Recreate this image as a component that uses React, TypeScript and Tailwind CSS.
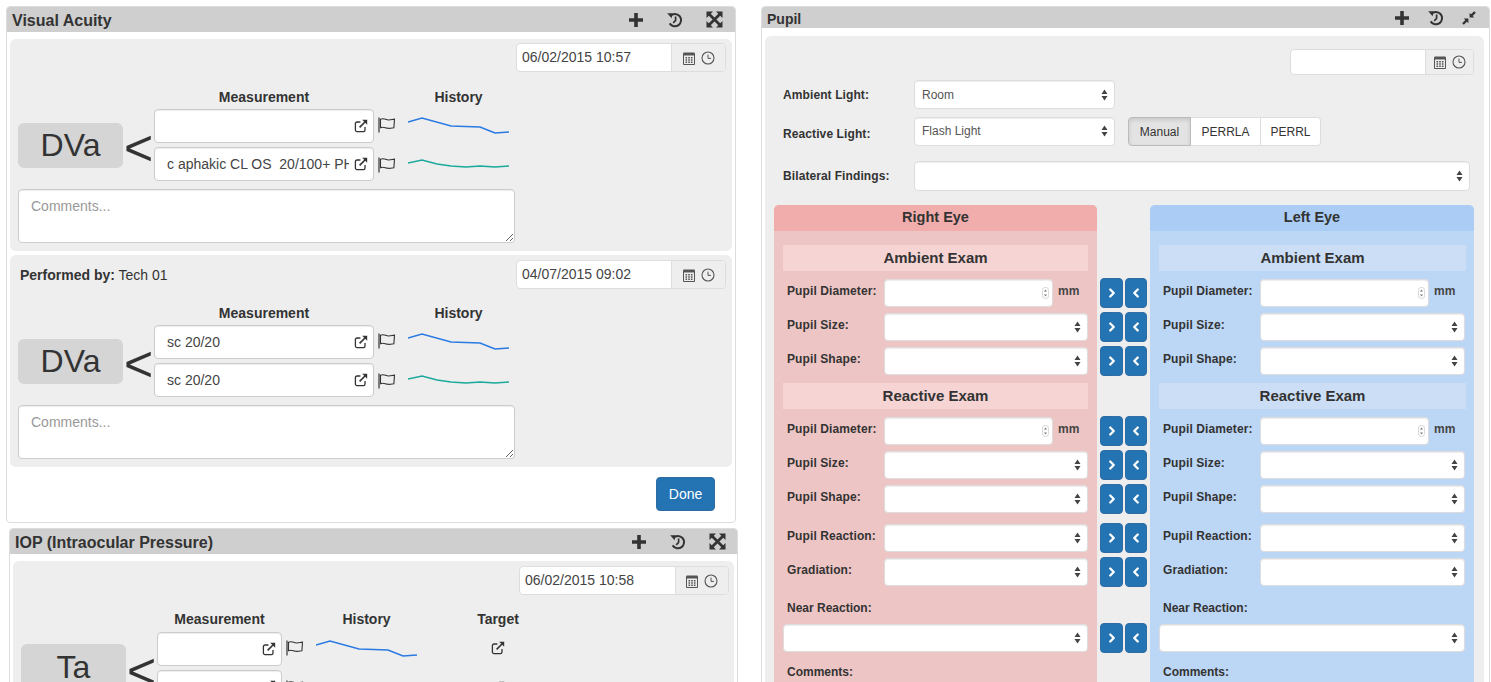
import React from 'react';
import { ChevronLeft, ChevronRight } from 'lucide-react';

const font = "font-['Liberation_Sans',Arial,sans-serif]";
const inset = 'shadow-[inset_0_1px_1px_rgba(0,0,0,0.075)]';

const PlusIcon = () => (
  <svg width="16" height="16" viewBox="0 0 16 16" className="text-[#333]">
    <path d="M1 6.2h5.2V1h3.6v5.2H15v3.6H9.8V15H6.2V9.8H1z" fill="currentColor" />
  </svg>
);

const HistoryIcon = () => (
  <svg width="16" height="16" viewBox="0 0 16 16" fill="none" className="text-[#333]">
    <path d="M3.4 3.8A6.2 6.2 0 1 1 2.6 11.4" stroke="currentColor" strokeWidth="2" />
    <path d="M0.2 1.2h5.4l-1 5z" fill="currentColor" />
    <path d="M8.6 4.4v4l-2.4 2.4" stroke="currentColor" strokeWidth="1.7" />
  </svg>
);

const ExpandIcon = () => (
  <svg width="17" height="17" viewBox="0 0 17 17" fill="none" className="text-[#333]">
    <path d="M3 3l11 11M14 3L3 14" stroke="currentColor" strokeWidth="2.8" />
    <path d="M0.5 0.5h6.5L0.5 7zM16.5 0.5v6.5L10 0.5zM0.5 16.5V10L7 16.5zM16.5 16.5H10L16.5 10z" fill="currentColor" />
  </svg>
);

const CompressIcon = () => (
  <svg width="14" height="14" viewBox="0 0 14 14" fill="none" className="text-[#333]">
    <path d="M13 1L9.5 4.5M1 13l3.5-3.5" stroke="currentColor" strokeWidth="2.4" />
    <path d="M7.6 1.8v4.6h4.6zM6.4 12.2V7.6H1.8z" fill="currentColor" />
  </svg>
);

const FlagIcon = () => (
  <svg width="19" height="16" viewBox="0 0 19 16" fill="none" className="text-[#333] shrink-0 mt-[1px]">
    <path d="M1 0.5v15" stroke="currentColor" strokeWidth="1.2" />
    <path d="M2.5 2.2c3.5-1.6 5 0.6 8 0.8 2.2 0.1 3.8-0.6 6-0.9l-0.6 8.6c-2.4 0.4-3.8 0.9-6 0.6-2.8-0.3-4.4-1.8-7.4-0.6z" stroke="currentColor" strokeWidth="1.1" />
  </svg>
);

const LinkIcon = () => (
  <svg width="14" height="14" viewBox="0 0 14 14" fill="none" className="text-[#333] shrink-0">
    <path d="M11 8v3a1.6 1.6 0 0 1-1.6 1.6H3A1.6 1.6 0 0 1 1.4 11V4.6A1.6 1.6 0 0 1 3 3h3.4" stroke="currentColor" strokeWidth="1.3" />
    <path d="M5.6 8.4L11 3" stroke="currentColor" strokeWidth="1.6" />
    <path d="M8.2 0.8h5v5z" fill="currentColor" />
  </svg>
);

const CalendarIcon = () => (
  <svg width="12" height="14" viewBox="0 0 12 14" fill="none" className="text-[#555]">
    <path d="M0.5 2.5h11v11H0.5z" stroke="currentColor" />
    <path d="M0.5 1.5h11V4.5H0.5z" fill="currentColor" />
    <path d="M2.5 6h1.6v1.4H2.5zM5.2 6h1.6v1.4H5.2zM7.9 6h1.6v1.4H7.9zM2.5 8.3h1.6v1.4H2.5zM5.2 8.3h1.6v1.4H5.2zM7.9 8.3h1.6v1.4H7.9zM2.5 10.6h1.6V12H2.5zM5.2 10.6h1.6V12H5.2zM7.9 10.6h1.6V12H7.9z" fill="currentColor" />
  </svg>
);

const ClockIcon = () => (
  <svg width="14" height="14" viewBox="0 0 14 14" fill="none" className="text-[#555]">
    <circle cx="7" cy="7" r="6" stroke="currentColor" strokeWidth="1.1" />
    <path d="M7 3.6V7.4h3" stroke="currentColor" strokeWidth="1" />
  </svg>
);

const SelectArrows = () => (
  <svg width="7" height="12" viewBox="0 0 7 12" className="text-[#444]">
    <path d="M3.5 0.5L6.5 5H0.5zM3.5 11.5L0.5 7h6z" fill="currentColor" />
  </svg>
);

const Spinner = () => (
  <svg width="7" height="12" viewBox="0 0 7 12" fill="none" className="text-[#777]">
    <rect x="0.4" y="0.4" width="6.2" height="11.2" rx="3" stroke="#ccc" strokeWidth="0.8" />
    <path d="M3.5 2.4L5 4.6H2zM3.5 9.6L2 7.4h3z" fill="currentColor" />
  </svg>
);

const Spark = ({ points, color }: { points: string; color: string }) => (
  <svg width="102" height="18" viewBox="0 0 102 18" fill="none" className="shrink-0">
    <polyline points={points} stroke={color} strokeWidth="1.6" />
  </svg>
);

const BLUE_LINE = '0,6 14,2 43,10 72,11 87,17 101,16';
const TEAL_LINE = '0,7 14,4 29,8 43,10 58,11 72,10 87,11 101,10';

const Panel = ({
  title,
  collapse,
  className,
  headerClass,
  titleClass,
  iconsClass,
  children,
}: {
  title: string;
  collapse?: boolean;
  className: string;
  headerClass: string;
  titleClass: string;
  iconsClass: string;
  children: React.ReactNode;
}) => (
  <div className={`bg-white border border-[#ddd] rounded-[4px] overflow-hidden ${className}`}>
    <div className={`flex items-center justify-between bg-[#cfcfcf] pl-[5px] ${headerClass}`}>
      <span className={`font-bold text-[#333] ${titleClass}`}>{title}</span>
      <div className={`flex items-center ${iconsClass}`}>
        <PlusIcon />
        <HistoryIcon />
        {collapse ? <CompressIcon /> : <ExpandIcon />}
      </div>
    </div>
    {children}
  </div>
);

const DateGroup = ({ value, inputClass, className }: { value: string; inputClass: string; className: string }) => (
  <div className={`flex border border-[#ddd] rounded-[4px] bg-white overflow-hidden ${className}`}>
    <div className={`flex items-center pl-[5px] text-[14px] text-[#444] ${inputClass}`}>{value}</div>
    <div className="flex-1 flex items-center justify-center gap-[6px] bg-[#eee] border-l border-[#ddd]">
      <CalendarIcon />
      <ClockIcon />
    </div>
  </div>
);

const MeasureInput = ({ value, className }: { value: string; className: string }) => (
  <div className={`relative h-[34px] ${className}`}>
    <input
      readOnly
      value={value}
      className={`w-full h-full bg-white border border-[#ccc] rounded-[4px] pl-[12px] pr-[24px] text-[14px] text-[#444] outline-none ${inset}`}
    />
    <span className="absolute right-[6px] top-[10px]">
      <LinkIcon />
    </span>
  </div>
);

const VisualWell = ({
  date,
  first,
  second,
  performer,
}: {
  date: string;
  first: string;
  second: string;
  performer?: boolean;
}) => (
  <div className={`h-[212px] bg-[#eee] rounded-[6px] pl-[8px] pr-[6px] ${performer ? 'pt-[5px]' : 'pt-[4px]'}`}>
    <div className="flex items-center justify-between">
      {performer ? (
        <div className="pl-[2px] pt-[2px] text-[14px] text-[#333]">
          <span className="font-bold">Performed by:</span> Tech 01
        </div>
      ) : (
        <div />
      )}
      <DateGroup value={date} className="w-[210px] h-[29px]" inputClass="w-[154px]" />
    </div>
    <div className={`flex h-[20px] items-center text-[14px] font-bold text-[#333] text-center ${performer ? 'mt-[14px]' : 'mt-[15px]'}`}>
      <div className="w-[136px]" />
      <div className="w-[220px]">Measurement</div>
      <div className="w-[34px]" />
      <div className="w-[101px]">History</div>
    </div>
    <div className="flex items-center mt-[2px]">
      <div className="w-[105px] h-[45px] rounded-[6px] bg-[#d5d5d5] flex items-center justify-center text-[32px] text-[#333]">DVa</div>
      <div className="w-[31px] text-[50px] font-light leading-none text-[#333] text-center mt-[6px]">&lt;</div>
      <div className="flex flex-col gap-[4px] w-[220px]">
        <MeasureInput value={first} className="w-full" />
        <MeasureInput value={second} className="w-full" />
      </div>
      <div className="flex flex-col gap-[22px] ml-[4px]">
        <div className="flex items-start gap-[11px]">
          <FlagIcon />
          <Spark points={BLUE_LINE} color="#2a7ae2" />
        </div>
        <div className="flex items-start gap-[11px]">
          <FlagIcon />
          <Spark points={TEAL_LINE} color="#1aa99a" />
        </div>
      </div>
    </div>
    <textarea
      readOnly
      placeholder="Comments..."
      className={`block w-[497px] h-[54px] mt-[8px] bg-white border border-[#ccc] rounded-[4px] px-[12px] py-[6px] text-[14px] outline-none placeholder:text-[#999] ${inset}`}
    />
  </div>
);

const SelectBox = ({ value, className }: { value?: string; className: string }) => (
  <div className={`flex items-center justify-between bg-white border border-[#ddd] rounded-[4px] pl-[7px] pr-[6px] text-[12px] text-[#555] ${inset} ${className}`}>
    <span>{value}</span>
    <SelectArrows />
  </div>
);

const FieldRow = ({
  label,
  number,
  selectClass,
  className,
}: {
  label: string;
  number?: boolean;
  selectClass: string;
  className?: string;
}) => (
  <div className={`flex items-start h-[28px] ${className ?? ''}`}>
    <div className="w-[101px] pl-[4px] pt-[3px] text-[12px] font-bold text-[#333] shrink-0 tracking-[0.1px]">{label}</div>
    {number ? (
      <>
        <div className={`w-[169px] h-[28px] flex items-center justify-end pr-[3px] bg-white border border-[#ddd] rounded-[4px] ${inset}`}>
          <Spinner />
        </div>
        <span className="ml-[5px] pt-[3px] text-[12px] font-bold text-[#444]">mm</span>
      </>
    ) : (
      <SelectBox className={`h-[28px] ${selectClass}`} />
    )}
  </div>
);

const ExamHead = ({ text, className, mt }: { text: string; className: string; mt: string }) => (
  <div className={`h-[26px] flex items-center justify-center text-[15px] font-bold text-[#333] ${className} ${mt}`}>{text}</div>
);

const EyeColumn = ({
  title,
  widthClass,
  padClass,
  selectClass,
  nearClass,
  headClass,
  bodyClass,
  subClass,
}: {
  title: string;
  widthClass: string;
  padClass: string;
  selectClass: string;
  nearClass: string;
  headClass: string;
  bodyClass: string;
  subClass: string;
}) => (
  <div className={`shrink-0 h-[520px] rounded-t-[5px] overflow-hidden ${widthClass} ${bodyClass}`}>
    <div className={`h-[26px] flex items-center justify-center text-[14.5px] font-bold text-[#333] ${headClass}`}>{title}</div>
    <div className={`pl-[9px] pt-[14px] ${padClass}`}>
      <ExamHead text="Ambient Exam" className={subClass} mt="" />
      <FieldRow label="Pupil Diameter:" number selectClass={selectClass} className="mt-[8px]" />
      <FieldRow label="Pupil Size:" selectClass={selectClass} className="mt-[6px]" />
      <FieldRow label="Pupil Shape:" selectClass={selectClass} className="mt-[6px]" />
      <ExamHead text="Reactive Exam" className={subClass} mt="mt-[8px]" />
      <FieldRow label="Pupil Diameter:" number selectClass={selectClass} className="mt-[8px]" />
      <FieldRow label="Pupil Size:" selectClass={selectClass} className="mt-[6px]" />
      <FieldRow label="Pupil Shape:" selectClass={selectClass} className="mt-[6px]" />
      <FieldRow label="Pupil Reaction:" selectClass={selectClass} className="mt-[11px]" />
      <FieldRow label="Gradiation:" selectClass={selectClass} className="mt-[6px]" />
      <div className="mt-[12px] h-[20px] pl-[4px] flex items-center text-[12px] font-bold text-[#333]">Near Reaction:</div>
      <SelectBox className={`mt-[6px] h-[28px] ${nearClass}`} />
      <div className="mt-[10px] h-[20px] pl-[4px] flex items-center text-[12px] font-bold text-[#333]">Comments:</div>
    </div>
  </div>
);

const ArrowPair = ({ className }: { className: string }) => (
  <div className={`flex gap-[2px] ${className}`}>
    <button className="w-[23px] h-[30px] flex items-center justify-center bg-[#2474b3] border border-[#2e6da4] rounded-[4px] text-white">
      <ChevronRight size={14} strokeWidth={4} />
    </button>
    <button className="w-[22px] h-[30px] flex items-center justify-center bg-[#2474b3] border border-[#2e6da4] rounded-[4px] text-white">
      <ChevronLeft size={14} strokeWidth={4} />
    </button>
  </div>
);

const TopLabel = ({ text, className }: { text: string; className?: string }) => (
  <div className={`w-[131px] text-[12px] font-bold text-[#333] tracking-[0.1px] ${className ?? ''}`}>{text}</div>
);

export default function App() {
  return (
    <div className={`${font} flex h-[682px] w-[1491px] overflow-hidden bg-white`}>
      {/* left column */}
      <div className="w-[755px] pl-[6px] pt-[6px] shrink-0">
        <Panel
          title="Visual Acuity"
          className="w-[730px] h-[517px]"
          headerClass="h-[25px] pr-[12px]"
          titleClass="text-[16px] pt-[3px]"
          iconsClass="gap-[23px]"
        >
          <div className="pt-[7px] px-[3px] flex flex-col gap-[4px]">
            <VisualWell date="06/02/2015 10:57" first="" second="c aphakic CL OS  20/100+ PH" />
            <VisualWell date="04/07/2015 09:02" first="sc 20/20" second="sc 20/20" performer />
            <div className="flex justify-end pr-[17px] mt-[6px]">
              <button className="w-[59px] h-[34px] bg-[#2474b3] border border-[#2e6da4] rounded-[4px] text-white text-[14px]">Done</button>
            </div>
          </div>
        </Panel>

        <Panel
          title="IOP (Intraocular Pressure)"
          className="ml-[3px] mt-[5px] w-[729px] h-[200px]"
          headerClass="h-[25px] pr-[11px]"
          titleClass="text-[16px] pt-[3px]"
          iconsClass="gap-[23px]"
        >
          <div className="mt-[7px] mx-[3px] bg-[#eee] rounded-[6px] pt-[5px] pl-[8px] pr-[5px] h-[180px]">
            <div className="flex justify-end">
              <DateGroup value="06/02/2015 10:58" className="w-[210px] h-[29px]" inputClass="w-[155px]" />
            </div>
            <div className="flex mt-[14px] h-[20px] items-center text-[14px] font-bold text-[#333] text-center">
              <div className="w-[136px]" />
              <div className="w-[125px]">Measurement</div>
              <div className="w-[34px]" />
              <div className="w-[101px]">History</div>
              <div className="w-[162px]">Target</div>
            </div>
            <div className="flex items-center mt-[3px]">
              <div className="w-[105px] h-[45px] rounded-[6px] bg-[#d5d5d5] flex items-center justify-center text-[32px] text-[#333] -mt-[3px]">Ta</div>
              <div className="w-[31px] text-[50px] font-light leading-none text-[#333] text-center mt-[6px]">&lt;</div>
              <div className="flex flex-col gap-[4px] w-[125px]">
                <MeasureInput value="" className="w-full" />
                <MeasureInput value="" className="w-full" />
              </div>
              <div className="flex flex-col gap-[22px] ml-[4px]">
                <div className="flex items-start gap-[11px]">
                  <FlagIcon />
                  <Spark points={BLUE_LINE} color="#2a7ae2" />
                  <span className="ml-[62px] mt-[2px]">
                    <LinkIcon />
                  </span>
                </div>
                <div className="flex items-start gap-[11px]">
                  <FlagIcon />
                  <Spark points={TEAL_LINE} color="#1aa99a" />
                  <span className="ml-[62px] mt-[2px]">
                    <LinkIcon />
                  </span>
                </div>
              </div>
            </div>
          </div>
        </Panel>
      </div>

      {/* right column */}
      <div className="pl-[6px] pt-[6px] shrink-0">
        <Panel
          title="Pupil"
          collapse
          className="w-[729px] h-[700px]"
          headerClass="h-[21px] pr-[13px]"
          titleClass="text-[14px] pt-[4px]"
          iconsClass="gap-[18px]"
        >
          <div className="mt-[8px] ml-[3px] w-[719px] h-[660px] bg-[#eee] rounded-[6px] pt-[13px] pl-[9px]">
            <div className="flex justify-end pr-[10px]">
              <DateGroup value="" className="w-[184px] h-[26px]" inputClass="w-[134px]" />
            </div>
            <div className="flex items-center mt-[5px] pl-[9px]">
              <TopLabel text="Ambient Light:" />
              <SelectBox value="Room" className="w-[201px] h-[29px]" />
            </div>
            <div className="flex items-center mt-[8px] pl-[9px]">
              <TopLabel text="Reactive Light:" className="mt-[4px]" />
              <SelectBox value="Flash Light" className="w-[201px] h-[29px] pb-[2px]" />
              <div className="flex ml-[13px] h-[29px] text-[12px] text-[#333]">
                <div className="w-[63px] flex items-center justify-center bg-[#e3e3e3] border border-[#bbb] rounded-l-[4px] shadow-[inset_0_2px_4px_rgba(0,0,0,0.125)]">Manual</div>
                <div className="w-[70px] flex items-center justify-center bg-white border-y border-r border-[#ddd]">PERRLA</div>
                <div className="w-[60px] flex items-center justify-center bg-white border-y border-r border-[#ddd] rounded-r-[4px]">PERRL</div>
              </div>
            </div>
            <div className="flex items-center mt-[15px] pl-[9px]">
              <TopLabel text="Bilateral Findings:" />
              <SelectBox className="w-[556px] h-[30px]" />
            </div>
            <div className="flex mt-[14px]">
              <EyeColumn
                title="Right Eye"
                widthClass="w-[323px]"
                padClass="pr-[9px]"
                selectClass="w-[204px]"
                nearClass="w-[305px]"
                headClass="bg-[#f1adab]"
                bodyClass="bg-[#eec5c5]"
                subClass="bg-[#f5d4d3]"
              />
              <div className="w-[53px] shrink-0 pl-[3px] flex flex-col">
                <ArrowPair className="mt-[73px]" />
                <ArrowPair className="mt-[4px]" />
                <ArrowPair className="mt-[4px]" />
                <ArrowPair className="mt-[40px]" />
                <ArrowPair className="mt-[4px]" />
                <ArrowPair className="mt-[4px]" />
                <ArrowPair className="mt-[9px]" />
                <ArrowPair className="mt-[4px]" />
                <ArrowPair className="mt-[36px]" />
              </div>
              <EyeColumn
                title="Left Eye"
                widthClass="w-[324px]"
                padClass="pr-[8px]"
                selectClass="w-[205px]"
                nearClass="w-[306px]"
                headClass="bg-[#abcdf5]"
                bodyClass="bg-[#bcd6f6]"
                subClass="bg-[#cbdef5]"
              />
            </div>
          </div>
        </Panel>
      </div>
    </div>
  );
}
